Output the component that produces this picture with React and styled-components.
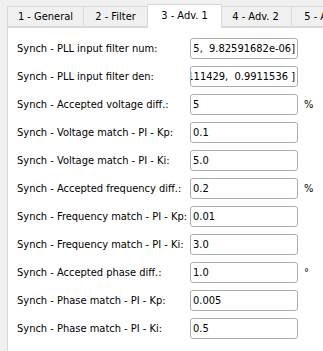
import React from "react";
import styled, { createGlobalStyle } from "styled-components";

const GlobalStyle = createGlobalStyle`
  html, body {
    margin: 0;
    padding: 0;
    background: #f0f0f0;
    overflow: hidden;
  }
  body {
    font-family: "DejaVu Sans Condensed", "DejaVu Sans", sans-serif;
    font-size: 11px;
    color: #000;
  }
`;

const Page = styled.div`
  width: 323px;
  height: 351px;
  overflow: hidden;
`;

const TabBar = styled.div`
  display: flex;
  align-items: flex-end;
  height: 28px;
  padding-left: 7px;
  position: relative;
  z-index: 1;
`;

const Tab = styled.div`
  box-sizing: border-box;
  flex: none;
  width: ${(p) => p.$w}px;
  height: ${(p) => (p.$active ? 24 : 21)}px;
  margin: ${(p) => (p.$active ? "0 -2px 0 -2px" : "0 0 1px 0")};
  margin-left: ${(p) => (p.$first ? 0 : -1)}px;
  background: ${(p) => (p.$active ? "#fff" : "#f0f0f0")};
  border: 1px solid #d9d9d9;
  border-bottom: ${(p) => (p.$active ? "none" : "1px solid #d9d9d9")};
  display: flex;
  align-items: center;
  justify-content: center;
  padding-bottom: ${(p) => (p.$active ? 3 : 0)}px;
  white-space: nowrap;
  position: relative;
  z-index: ${(p) => (p.$active ? 2 : 1)};
`;

const Pane = styled.div`
  box-sizing: border-box;
  margin-left: 7px;
  margin-top: -1px;
  width: 400px;
  min-height: 400px;
  background: #fff;
  border: 1px solid #d9d9d9;
  padding: 10px 0 0 9px;
  display: flex;
  flex-direction: column;
  gap: 7px;
`;

const Row = styled.div`
  display: grid;
  grid-template-columns: 173px 108px auto;
  align-items: center;
  height: 21px;
`;

const Label = styled.div`
  white-space: nowrap;
  overflow: hidden;
`;

const Field = styled.div`
  box-sizing: border-box;
  height: 21px;
  border: 1px solid #acacac;
  border-radius: 3px;
  background: #fff;
  display: flex;
  align-items: center;
  justify-content: ${(p) => (p.$scrolled ? "flex-end" : "flex-start")};
  padding: 0 2px;
  overflow: hidden;
  white-space: pre;
`;

const Unit = styled.div`
  padding-left: 6px;
`;

const tabs = [
  { t: "1 - General", w: 77 },
  { t: "2 - Filter", w: 65 },
  { t: "3 - Adv. 1", w: 75, active: true },
  { t: "4 - Adv. 2", w: 73 },
  { t: "5 - Adv. 3", w: 73 },
];

const rows = [
  ["Synch - PLL input filter num:", "[9.82591682e-06,  1.96518336e-0 5,  9.82591682e-06]", "", true],
  ["Synch - PLL input filter den:", "[ 1.        , -1.99 111429,  0.9911536 ]", "", true],
  ["Synch - Accepted voltage diff.:", "5", "%"],
  ["Synch - Voltage match - PI - Kp:", "0.1", ""],
  ["Synch - Voltage match - PI - Ki:", "5.0", ""],
  ["Synch - Accepted frequency diff.:", "0.2", "%"],
  ["Synch - Frequency match - PI - Kp:", "0.01", ""],
  ["Synch - Frequency match - PI - Ki:", "3.0", ""],
  ["Synch - Accepted phase diff.:", "1.0", "°"],
  ["Synch - Phase match - PI - Kp:", "0.005", ""],
  ["Synch - Phase match - PI - Ki:", "0.5", ""],
];

export default function App() {
  return (
    <Page>
      <GlobalStyle />
      <TabBar>
        {tabs.map((tab, i) => (
          <Tab key={tab.t} $w={tab.w} $active={tab.active} $first={i === 0}>
            {tab.t}
          </Tab>
        ))}
      </TabBar>
      <Pane>
        {rows.map(([label, value, unit, scrolled]) => (
          <Row key={label}>
            <Label>{label}</Label>
            <Field $scrolled={scrolled}>{value}</Field>
            <Unit>{unit}</Unit>
          </Row>
        ))}
      </Pane>
    </Page>
  );
}
